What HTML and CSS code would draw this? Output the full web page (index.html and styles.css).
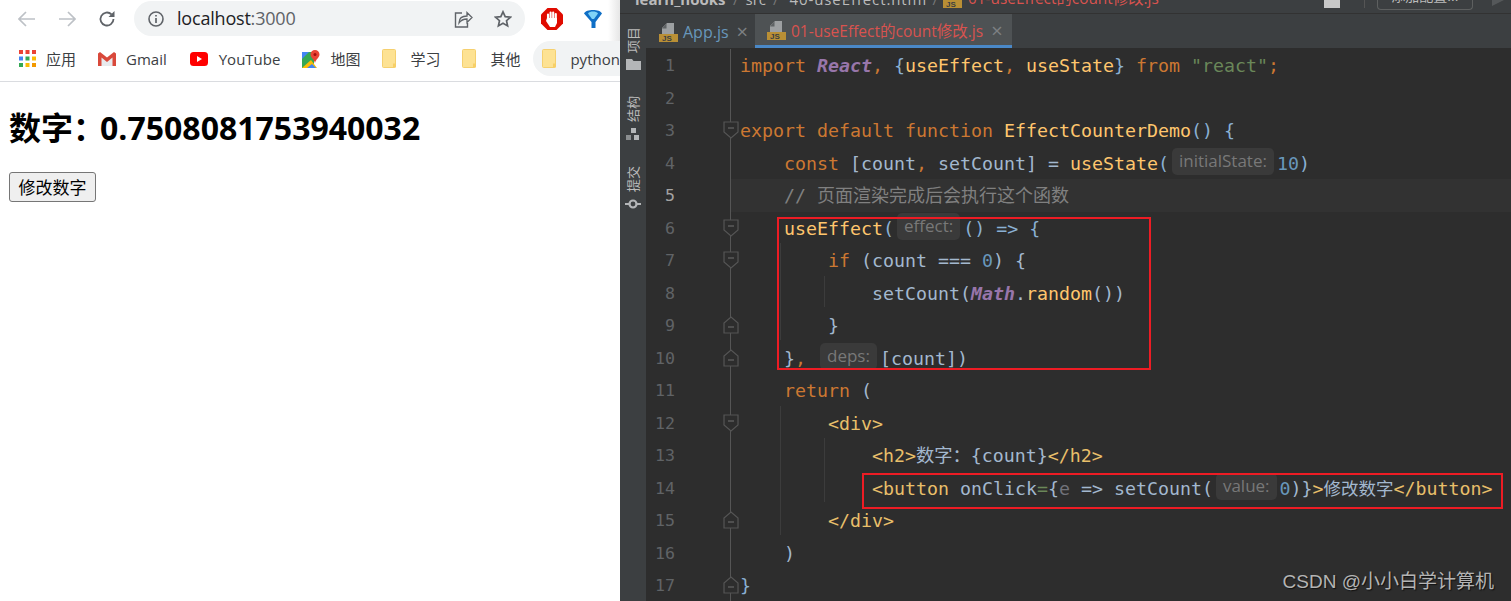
FILE: index.html
```html
<!DOCTYPE html>
<html lang="zh-CN">
  <head>
    <meta charset="UTF-8" />
    <meta name="viewport" content="width=device-width, initial-scale=1.0" />
    <title>useEffect count</title>
    <link rel="stylesheet" href="styles.css">
  </head>
  <body>
    <svg class="defs" width="0" height="0">
      <symbol id="bm-folder" viewBox="0 0 15 19">
        <path d="M1.500 0.500h11a1 1 0 0 1 1 1v16a1 1 0 0 1-1 1h-11a1 1 0 0 1-1-1v-16a1 1 0 0 1 1-1z" fill="#fde293" stroke="#f5d06f"/>
        <path d="M11 18.500v-4h3v3a1 1 0 0 1-1 1z" fill="#f7cf66"/>
      </symbol>
      <symbol id="fold-open" viewBox="0 0 16 18">
        <path d="M1 1h14v10l-7 6-7-6z" fill="#2d2d2d" stroke="#555" stroke-width="1.200"/>
        <path d="M5 7h6" stroke="#666" stroke-width="1.200"/>
      </symbol>
      <symbol id="fold-end" viewBox="0 0 16 18">
        <path d="M1 17h14V7L8 1 1 7z" fill="#2d2d2d" stroke="#555" stroke-width="1.200"/>
        <path d="M5 11h6" stroke="#666" stroke-width="1.200"/>
      </symbol>
      <symbol id="js-file" viewBox="0 0 19 19">
        <path d="M8 0h7v11H3V5z" fill="#9da0a2"/>
        <path d="M7.500 0.500v5h-4.500z" fill="#5f6365"/>
        <path d="M0 11h19v8H0z" fill="#b98f35"/>
        <text x="3" y="18" class="js-label">JS</text>
      </symbol>
    </svg>

    <div class="browser">
      <div class="toolbar">
        <span class="tb-btn">
          <svg width="18" height="16" viewBox="0 0 18 16"><path d="M8 1L1 8l7 7M1 8h16" fill="none" stroke="#bdc1c6" stroke-width="1.700"/></svg>
        </span>
        <span class="tb-btn">
          <svg width="18" height="16" viewBox="0 0 18 16"><path d="M10 1l7 7-7 7M17 8H1" fill="none" stroke="#bdc1c6" stroke-width="1.700"/></svg>
        </span>
        <span class="tb-btn">
          <svg width="18" height="18" viewBox="0 0 18 18"><path d="M15.500 9a6.500 6.500 0 1 1-2-4.700" fill="none" stroke="#5f6368" stroke-width="1.800"/><path d="M16.500 1v6h-6z" fill="#5f6368"/></svg>
        </span>
        <div class="address">
          <svg class="addr-info" width="16" height="16" viewBox="0 0 16 16"><circle cx="8" cy="8" r="7" fill="none" stroke="#5f6368" stroke-width="1.600"/><path d="M8 7v5M8 4v1.600" stroke="#5f6368" stroke-width="1.700"/></svg>
          <span class="url">localhost<span class="url-port">:3000</span></span>
          <svg class="addr-share" width="19" height="18" viewBox="0 0 19 18"><path d="M8 3H1.500v14h12v-4" fill="none" stroke="#5f6368" stroke-width="1.400"/><path d="M5 13c0-5 3-7 8-7V2.500l5 5-5 5V9c-4 0-6 1-8 4z" fill="#f1f3f4" stroke="#5f6368" stroke-width="1.300"/></svg>
          <svg class="addr-star" width="18" height="18" viewBox="0 0 18 18"><path d="M9 1.800l2.200 4.800 5.200.6-3.900 3.500 1.100 5.200L9 13.300l-4.600 2.600 1.100-5.200L1.600 7.200l5.200-.6z" fill="none" stroke="#5f6368" stroke-width="1.700"/></svg>
        </div>
        <span class="tb-btn ext">
          <svg width="22" height="22" viewBox="0 0 22 22">
            <path d="M6.500 0h9L22 6.500v9L15.500 22h-9L0 15.500v-9z" fill="#e00b00"/>
            <path d="M7 6.500v6M9.600 4.500v7M12.200 4.500v7M14.800 6v6" stroke="#fff" stroke-width="2.100" stroke-linecap="round"/>
            <path d="M6 10h10v5l-2 4H9l-4-6z" fill="#fff"/>
          </svg>
        </span>
        <span class="tb-btn ext">
          <svg width="18" height="18" viewBox="0 0 18 18">
            <path d="M0 3.500C1 1 5 0 9 0s8 1 9 3.500L11.500 12v6h-4v-6z" fill="#0f6fc6"/>
            <path d="M4 3.500C5 2 7 1.500 9 1.500c2 0 4 .5 5 2L10 9H8z" fill="#7fd3f7"/>
          </svg>
        </span>
      </div>

      <div class="bookmarks">
        <span class="bm">
          <svg class="bm-icon" width="17" height="17" viewBox="0 0 17 17">
            <path d="M0 0h4v4H0z" fill="#ea4335"/><path d="M6.500 0h4v4h-4z" fill="#ea4335"/><path d="M13 0h4v4h-4z" fill="#ea4335"/>
            <path d="M0 6.500h4v4H0z" fill="#4285f4"/><path d="M6.500 6.500h4v4h-4z" fill="#34a853"/><path d="M13 6.500h4v4h-4z" fill="#fbbc04"/>
            <path d="M0 13h4v4H0z" fill="#34a853"/><path d="M6.500 13h4v4h-4z" fill="#fbbc04"/><path d="M13 13h4v4h-4z" fill="#f29900"/>
          </svg>
          应用
        </span>
        <span class="bm">
          <svg class="bm-icon" width="18" height="14" viewBox="0 0 18 14"><path d="M0 2v12h18V2L9 8.500z" fill="#e8eaed"/><path d="M0 1.500v12.500h3.500V5.500L9 10l5.500-4.500V14H18V1.500L16 0 9 5.500 2 0z" fill="#d9493b"/></svg>
          Gmail
        </span>
        <span class="bm bm-yt">
          <svg class="bm-icon bm-icon-yt" width="18" height="14" viewBox="0 0 18 14"><rect width="18" height="14" rx="3.500" fill="#f00"/><path d="M7 4l5 3-5 3z" fill="#fff"/></svg>
          YouTube
        </span>
        <span class="bm">
          <svg class="bm-icon" width="18" height="18" viewBox="0 0 18 18"><path d="M0 2h12v16H0z" fill="#34a853"/><path d="M0 2h7L0 9z" fill="#4285f4"/><path d="M0 18l9-8 6 8z" fill="#fbbc04"/><path d="M5 18l5-4 4 4z" fill="#4285f4"/><path d="M13 0a4.500 4.500 0 0 1 4.500 4.500C17.500 7.500 14 9 13 13c-1-4-4.500-5.500-4.500-8.500A4.500 4.500 0 0 1 13 0z" fill="#ea4335"/><circle cx="13" cy="4.500" r="1.500" fill="#a50e0e"/></svg>
          地图
        </span>
        <span class="bm">
          <svg class="bm-icon bm-icon-folder" width="15" height="19"><use href="#bm-folder"/></svg>
          学习
        </span>
        <span class="bm">
          <svg class="bm-icon bm-icon-folder" width="15" height="19"><use href="#bm-folder"/></svg>
          其他
        </span>
        <span class="bm bm-hover">
          <svg class="bm-icon bm-icon-folder" width="15" height="19"><use href="#bm-folder"/></svg>
          python
        </span>
      </div>

      <div class="page">
        <h2 class="count-title">数字<span class="count-colon">：</span>0.7508081753940032</h2>
        <button class="count-button">修改数字</button>
      </div>
    </div>

    <div class="ide">
      <div class="crumbs">
        <span class="crumb crumb-root">learn_hooks</span>
        <span class="crumb crumb-sep">/</span>
        <span class="crumb">src</span>
        <span class="crumb crumb-sep">/</span>
        <span class="crumb crumb-dir">40-useEffect.html</span>
        <span class="crumb crumb-sep">/</span>
        <svg class="crumb-js" width="19" height="19"><use href="#js-file"/></svg>
        <span class="crumb crumb-file">01-useEffect的count修改.js</span>
        <span class="crumb-user"></span>
        <span class="crumb-bar"></span>
        <span class="crumb-config">添加配置...</span>
        <span class="crumb-run"></span>
      </div>

      <div class="ide-body">
        <div class="strip">
          <div class="strip-item">
            <span class="strip-label">项目</span>
            <svg width="15" height="11" viewBox="0 0 15 11"><path d="M0 0h6l1.500 2H15v9H0z" fill="#b4b6b8"/></svg>
          </div>
          <div class="strip-item">
            <span class="strip-label">结构</span>
            <svg width="14" height="12" viewBox="0 0 14 12"><path d="M5 0h5v5H5z" fill="#b4b6b8"/><path d="M0 7h5v5H0z" fill="#8b8e90"/><path d="M8 7h5v5H8z" fill="#b4b6b8"/></svg>
          </div>
          <div class="strip-item">
            <span class="strip-label">提交</span>
            <svg width="16" height="12" viewBox="0 0 16 12"><circle cx="8" cy="6" r="3.500" fill="none" stroke="#b4b6b8" stroke-width="2.200"/><path d="M0 6h4M12 6h4" stroke="#b4b6b8" stroke-width="2"/></svg>
          </div>
        </div>

        <div class="main">
          <div class="tabs">
            <div class="tab">
              <svg width="19" height="19"><use href="#js-file"/></svg>
              <span class="tab-name tab-name-blue">App.js</span>
              <span class="tab-close">×</span>
            </div>
            <div class="tab tab-active">
              <svg width="19" height="19"><use href="#js-file"/></svg>
              <span class="tab-name tab-name-red">01-useEffect的count修改.js</span>
              <span class="tab-close">×</span>
            </div>
          </div>

          <div class="editor">
            <div class="line"><span class="num">1</span><span class="fold"></span><span class="code"><span class="k">import</span> <span class="cls">React</span><span class="k">,</span> <span class="p">{</span><span class="f">useEffect</span><span class="k">,</span> <span class="f">useState</span><span class="p">}</span> <span class="k">from</span> <span class="s">"react"</span><span class="k">;</span></span></div>
            <div class="line"><span class="num">2</span><span class="fold"></span><span class="code"></span></div>
            <div class="line"><span class="num">3</span><span class="fold"><svg width="16" height="18"><use href="#fold-open"/></svg></span><span class="code"><span class="k">export default function</span> <span class="f">EffectCounterDemo</span><span class="p">() {</span></span></div>
            <div class="line"><span class="num">4</span><span class="fold"></span><span class="code">    <span class="k">const</span> <span class="v">[count</span><span class="k">,</span> <span class="v">setCount] =</span> <span class="f">useState</span><span class="p">(</span><span class="hint">initialState:</span><span class="n">10</span><span class="p">)</span></span></div>
            <div class="line line-current"><span class="num">5</span><span class="fold"></span><span class="code">    <span class="c">// <span class="c-cjk">页面渲染完成后会执行这个函数</span></span></span></div>
            <div class="line"><span class="num">6</span><span class="fold"><svg width="16" height="18"><use href="#fold-open"/></svg></span><span class="code">    <span class="f">useEffect</span><span class="p">(</span><span class="hint">effect:</span><span class="p">() =&gt; {</span></span></div>
            <div class="line"><span class="num">7</span><span class="fold"><svg width="16" height="18"><use href="#fold-open"/></svg></span><span class="code">        <span class="k">if</span> <span class="v">(count === </span><span class="n">0</span><span class="v">) {</span></span></div>
            <div class="line"><span class="num">8</span><span class="fold"></span><span class="code">            <span class="v">setCount(</span><span class="cls">Math</span><span class="v">.</span><span class="f">random</span><span class="v">())</span></span></div>
            <div class="line"><span class="num">9</span><span class="fold"><svg width="16" height="18"><use href="#fold-end"/></svg></span><span class="code">        <span class="v">}</span></span></div>
            <div class="line"><span class="num">10</span><span class="fold"><svg width="16" height="18"><use href="#fold-end"/></svg></span><span class="code">    <span class="v">}</span><span class="k">,</span> <span class="hint">deps:</span><span class="v">[count])</span></span></div>
            <div class="line"><span class="num">11</span><span class="fold"></span><span class="code">    <span class="k">return</span> <span class="v">(</span></span></div>
            <div class="line"><span class="num">12</span><span class="fold"><svg width="16" height="18"><use href="#fold-open"/></svg></span><span class="code">        <span class="t">&lt;div&gt;</span></span></div>
            <div class="line"><span class="num">13</span><span class="fold"></span><span class="code">            <span class="t">&lt;h2&gt;</span><span class="v">数字：{count}</span><span class="t">&lt;/h2&gt;</span></span></div>
            <div class="line"><span class="num">14</span><span class="fold"></span><span class="code">            <span class="t">&lt;button</span> <span class="v">onClick</span><span class="g">=</span><span class="v">{</span><span class="d">e</span> <span class="v">=&gt; setCount(</span><span class="hint">value:</span><span class="n">0</span><span class="v">)}</span><span class="t">&gt;</span><span class="v v-cjk">修改数字</span><span class="t">&lt;/button&gt;</span></span></div>
            <div class="line"><span class="num">15</span><span class="fold"><svg width="16" height="18"><use href="#fold-end"/></svg></span><span class="code">        <span class="t">&lt;/div&gt;</span></span></div>
            <div class="line"><span class="num">16</span><span class="fold"></span><span class="code">    <span class="v">)</span></span></div>
            <div class="line"><span class="num">17</span><span class="fold"><svg width="16" height="18"><use href="#fold-end"/></svg></span><span class="code"><span class="p">}</span></span></div>

            <i class="guide guide-a"></i>
            <i class="guide guide-b"></i>
            <i class="guide guide-c"></i>
            <i class="guide guide-d"></i>
            <div class="mark mark-effect"></div>
            <div class="mark mark-button"></div>
          </div>
        </div>
      </div>
      <div class="watermark">CSDN @小小白学计算机</div>
    </div>
  </body>
</html>
```

FILE: styles.css
```css
* {
  box-sizing: border-box;
}

body {
  margin: 0;
  height: 601px;
  display: flex;
  overflow: hidden;
  background-color: #fff;
  font-family: "Open Sans", "Noto Sans CJK SC", sans-serif;
}

.defs {
  position: absolute;
}

.js-label {
  font-family: "Liberation Sans", sans-serif;
  font-size: 8px;
  font-weight: bold;
  fill: #3c3f41;
}

/* browser side */
.browser {
  width: 620px;
  flex-shrink: 0;
  overflow: hidden;
}

.toolbar {
  height: 41px;
  padding: 1px 0 0 7px;
  display: flex;
  align-items: flex-start;
  background: linear-gradient(to right, #fff 608px, #e6e6e6 620px);
}

.tb-btn {
  width: 40px;
  height: 35px;
  flex-shrink: 0;
  display: flex;
  align-items: center;
  justify-content: center;
}

.ext {
  margin-right: 1px;
}

.address {
  width: 391px;
  height: 35px;
  margin: 0 7px;
  flex-shrink: 0;
  padding-left: 14px;
  display: flex;
  align-items: center;
  background-color: #f1f3f4;
  border-radius: 18px;
}

.url {
  margin: -2px 0 0 13px;
  font-size: 18px;
  letter-spacing: -0.2px;
  color: #202124;
}

.url-port {
  color: #5f6368;
}

.addr-share {
  margin-left: auto;
  transform: translateX(1px);
}

.addr-star {
  margin: 0 13px 0 22px;
}

.bookmarks {
  height: 41px;
  padding-left: 10px;
  display: flex;
  align-items: flex-start;
  gap: 4px;
  border-bottom: 1px solid #dadce0;
  white-space: nowrap;
}

.bm {
  height: 35px;
  padding: 0 9px;
  display: flex;
  align-items: center;
  font-size: 15px;
  color: #3c4043;
  border-radius: 18px;
  flex-shrink: 0;
}

.bm-yt {
  margin-left: 1px;
}

.bm-icon {
  margin-right: 10px;
}

.bm-icon-yt {
  margin-right: 11px;
}

.bm-icon-folder {
  margin-right: 13px;
}

.bm-hover {
  background-color: #f1f3f4;
  padding-right: 30px;
}

.page {
  padding: 0 9px;
}

.count-title {
  margin: 24px 0 0;
  font-size: 32px;
  line-height: 44px;
  font-weight: bold;
  color: #000;
  white-space: nowrap;
}

.count-colon {
  letter-spacing: -5px;
}

.count-button {
  display: block;
  width: 87px;
  height: 30px;
  margin-top: 22px;
  padding: 0;
  font-family: "Noto Sans CJK SC", sans-serif;
  font-size: 17px;
  line-height: 28px;
  color: #000;
  background-color: #efefef;
  border: 1px solid #767676;
  border-radius: 3px;
}

/* ide side */
.ide {
  position: relative;
  flex: 1;
  height: 601px;
  overflow: hidden;
  background-color: #2d2d2d;
}

.crumbs {
  height: 14px;
  padding-left: 15px;
  display: flex;
  align-items: flex-start;
  overflow: hidden;
  background-color: #3c3f41;
  border-bottom: 1px solid #323232;
  font-size: 15px;
  color: #bbb;
  white-space: nowrap;
}

.crumb {
  line-height: 18px;
  flex-shrink: 0;
  margin-top: -10px;
}

.crumb-root {
  font-weight: bold;
  width: 91px;
}

.crumb-sep {
  margin: -10px 7px 0;
  color: #777;
}

.crumb-dir {
  width: 136px;
  margin-left: 4px;
  letter-spacing: 0.9px;
}

.crumb-js {
  flex-shrink: 0;
  margin: -11px 6px 0 -2px;
}

.crumb-file {
  font-size: 15.400px;
  color: #d9534f;
}

.crumb-user {
  flex-shrink: 0;
  width: 16px;
  height: 8px;
  margin-left: 165px;
  background-color: #c8c8c8;
}

.crumb-bar {
  flex-shrink: 0;
  width: 1px;
  height: 8px;
  margin-left: 24px;
  background-color: #555;
}

.crumb-config {
  flex-shrink: 0;
  width: 96px;
  height: 10px;
  margin-left: 12px;
  padding-bottom: 5px;
  display: flex;
  align-items: flex-end;
  justify-content: center;
  overflow: hidden;
  font-size: 14px;
  line-height: 16px;
  color: #bbb;
  border: 1px solid #5e6060;
  border-top: none;
  border-radius: 0 0 4px 4px;
}

.crumb-run {
  flex-shrink: 0;
  width: 0;
  height: 0;
  margin-left: 19px;
  border-left: 12px solid #55585a;
  border-bottom: 6px solid transparent;
}

.ide-body {
  display: flex;
  height: 587px;
}

.strip {
  width: 26px;
  flex-shrink: 0;
  padding-top: 13px;
  display: flex;
  flex-direction: column;
  align-items: center;
  gap: 26px;
  background-color: #3c3f41;
}

.strip-item {
  display: flex;
  flex-direction: column;
  align-items: center;
  gap: 6px;
}

.strip-label {
  writing-mode: vertical-rl;
  text-orientation: sideways;
  transform: rotate(180deg);
  font-size: 13px;
  line-height: 16px;
  color: #bbb;
}

.main {
  flex: 1;
  min-width: 0;
}

.tabs {
  height: 34px;
  display: flex;
  background-color: #3c3f41;
}

.tab {
  height: 34px;
  padding: 2px 7px 0 13px;
  display: flex;
  align-items: center;
  gap: 5px;
}

.tab-active {
  padding: 2px 9px 0 12px;
  background-color: #4e5254;
  border-bottom: 3px solid #4a88c7;
}

.tab-name {
  font-size: 15.500px;
  white-space: nowrap;
}

.tab-name-blue {
  font-size: 16px;
  color: #6897bb;
}

.tab-name-red {
  color: #d9534f;
}

.tab-close {
  margin-left: 3px;
  font-size: 20px;
  line-height: 20px;
  color: #7d8083;
}

.editor {
  position: relative;
  padding-top: 1px;
  font-family: "DejaVu Sans Mono", "Noto Sans CJK SC", monospace;
  font-size: 18.270px;
}

.line {
  height: 32.500px;
  line-height: 34.500px;
  display: flex;
  white-space: pre;
}

.num {
  width: 29px;
  margin-right: 48px;
  flex-shrink: 0;
  text-align: right;
  font-size: 16.600px;
  color: #606366;
}

.fold {
  width: 16px;
  flex-shrink: 0;
  display: flex;
  align-items: center;
  background: linear-gradient(to right, transparent 7px, #555 7px, #555 8px, transparent 8px);
}

.code {
  flex: 1;
  padding-left: 1px;
}

.line-current .num {
  color: #a4a3a3;
}

.line-current .fold {
  background: linear-gradient(to right, transparent 7px, #555 7px, #555 8px, #323232 8px);
}

.line-current .code {
  background-color: #323232;
}

.k { color: #cc7832; }
.f { color: #ffc66d; }
.v { color: #a3b8cf; }
.p { color: #8ab0d3; }
.n { color: #6897bb; }
.s { color: #6a8759; }
.c { color: #808080; }
.t { color: #e8bf6a; }
.g { color: #6a8759; }
.d { color: #72737a; }

.c-cjk {
  font-size: 18px;
}

.v-cjk {
  font-size: 17.500px;
}

.cls {
  color: #9876aa;
  font-style: italic;
  font-weight: bold;
}

.hint {
  display: inline-block;
  height: 27px;
  margin: 1px 3px 0 3px;
  padding: 0 7px;
  vertical-align: top;
  font-family: "Open Sans", sans-serif;
  font-size: 17px;
  line-height: 26px;
  color: #787878;
  background-color: #3a3a3a;
  border-radius: 5px;
}

.guide {
  position: absolute;
  width: 1px;
  background-color: #3c3c3c;
}

.guide-a { left: 134px; top: 195px; height: 97px; }
.guide-b { left: 178px; top: 228px; height: 31px; }
.guide-c { left: 134px; top: 358px; height: 129px; }
.guide-d { left: 178px; top: 390px; height: 64px; }

.mark {
  position: absolute;
  border: 2px solid #ed1c24;
}

.mark-effect { left: 131px; top: 169px; width: 374px; height: 153px; }
.mark-button { left: 216px; top: 425px; width: 641px; height: 36px; }

.watermark {
  position: absolute;
  right: 17px;
  bottom: 7px;
  font-family: "Liberation Sans", "Noto Sans CJK SC", sans-serif;
  font-size: 19px;
  line-height: 24px;
  color: #b4b4b4;
  text-shadow: 1px 1px 1px #111;
}
```
